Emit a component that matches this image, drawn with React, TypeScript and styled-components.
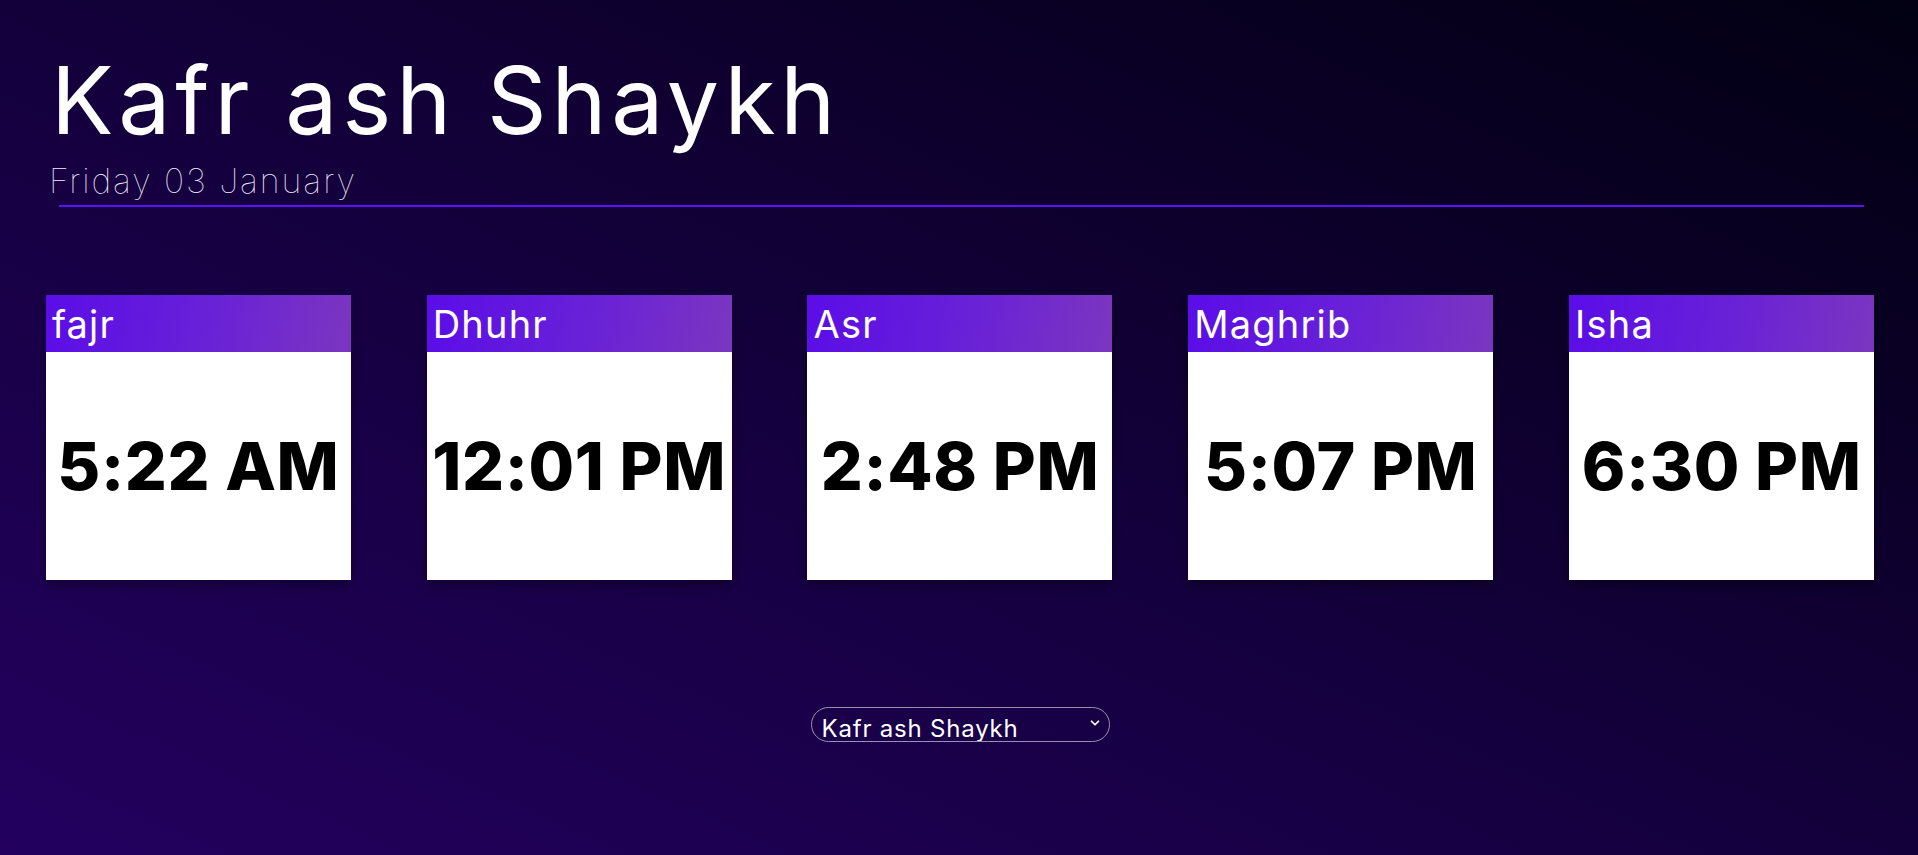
import React from "react";
import styled, { createGlobalStyle } from "styled-components";
import { ChevronDown } from "lucide-react";

const GlobalStyle = createGlobalStyle`
  html, body { margin: 0; padding: 0; }
  body {
    min-height: 100vh;
    background: linear-gradient(to top right, #23005f 0%, #15003f 45%, #020012 100%);
    background-attachment: fixed;
    font-family: Inter, "Open Sans", sans-serif;
  }
`;

const Page = styled.main`
  min-height: 855px;
  box-sizing: border-box;
  padding: 54px 6px 0 8px;
  display: flex;
  flex-direction: column;
`;

const Header = styled.header`
  display: flex;
  flex-direction: column;
  padding-left: 43px;
`;

const Title = styled.h1`
  margin: 0;
  font-family: Inter, sans-serif;
  font-weight: 400;
  font-size: 93px;
  line-height: 1;
  letter-spacing: 4.8px;
  color: #ffffff;
`;

const Subtitle = styled.p`
  margin: 17px 0 0 -2px;
  font-family: Inter, sans-serif;
  font-weight: 100;
  font-size: 34px;
  line-height: 1;
  letter-spacing: 1.9px;
  color: #f4eefc;
`;

const Rule = styled.hr`
  border: 0;
  height: 2px;
  background: #5d12f5;
  margin: 7px 48px 0 51px;
`;

const CardRow = styled.section`
  margin-top: 88px;
  display: flex;
  justify-content: space-around;
`;

const Card = styled.article`
  width: 305px;
  height: 285px;
  display: flex;
  flex-direction: column;
  background: #ffffff;
  box-shadow: 0 5px 10px rgba(0, 0, 0, 0.35);
`;

const CardHead = styled.div`
  height: 57px;
  flex: none;
  display: flex;
  align-items: center;
  padding-left: 6px;
  background: linear-gradient(100deg, #5a0de8 0%, #6a22d6 55%, #7b36c0 100%);
  color: #ffffff;
  font-family: Inter, sans-serif;
  font-size: 38px;
  font-weight: 400;
  letter-spacing: 1.2px;
`;

const CardBody = styled.div`
  flex: 1;
  display: flex;
  align-items: center;
  justify-content: center;
  color: #000000;
  font-family: Inter, "Liberation Sans", sans-serif;
  font-weight: 800;
  font-size: 66px;
  letter-spacing: 0.6px;
  font-feature-settings: "calt" 0;
  white-space: nowrap;
`;

const SelectWrap = styled.div`
  position: relative;
  margin: 127px auto 0;
  width: 299px;
  height: 35px;
`;

const CitySelect = styled.select`
  appearance: none;
  -webkit-appearance: none;
  width: 100%;
  height: 100%;
  box-sizing: border-box;
  border: 1px solid #9a8fb0;
  border-radius: 18px;
  background: transparent;
  color: #ffffff;
  font-family: Inter, sans-serif;
  font-size: 24px;
  letter-spacing: 0.8px;
  padding: 6px 30px 0 10px;
  outline: none;
  overflow: hidden;
  & option { color: #000; }
`;

const Chevron = styled.span`
  position: absolute;
  right: 8px;
  top: 9px;
  color: #ffffff;
  display: flex;
  pointer-events: none;
`;

const prayers = [
  { name: "fajr", time: "5:22 AM" },
  { name: "Dhuhr", time: "12:01 PM" },
  { name: "Asr", time: "2:48 PM" },
  { name: "Maghrib", time: "5:07 PM" },
  { name: "Isha", time: "6:30 PM" },
];

export default function App() {
  return (
    <>
      <GlobalStyle />
      <Page>
        <Header>
          <Title>Kafr ash Shaykh</Title>
          <Subtitle>Friday 03 January</Subtitle>
        </Header>
        <Rule />
        <CardRow>
          {prayers.map((p) => (
            <Card key={p.name}>
              <CardHead>{p.name}</CardHead>
              <CardBody>{p.time}</CardBody>
            </Card>
          ))}
        </CardRow>
        <SelectWrap>
          <CitySelect defaultValue="Kafr ash Shaykh">
            <option>Kafr ash Shaykh</option>
            <option>Cairo</option>
            <option>Alexandria</option>
          </CitySelect>
          <Chevron>
            <ChevronDown size={14} strokeWidth={3} />
          </Chevron>
        </SelectWrap>
      </Page>
    </>
  );
}
